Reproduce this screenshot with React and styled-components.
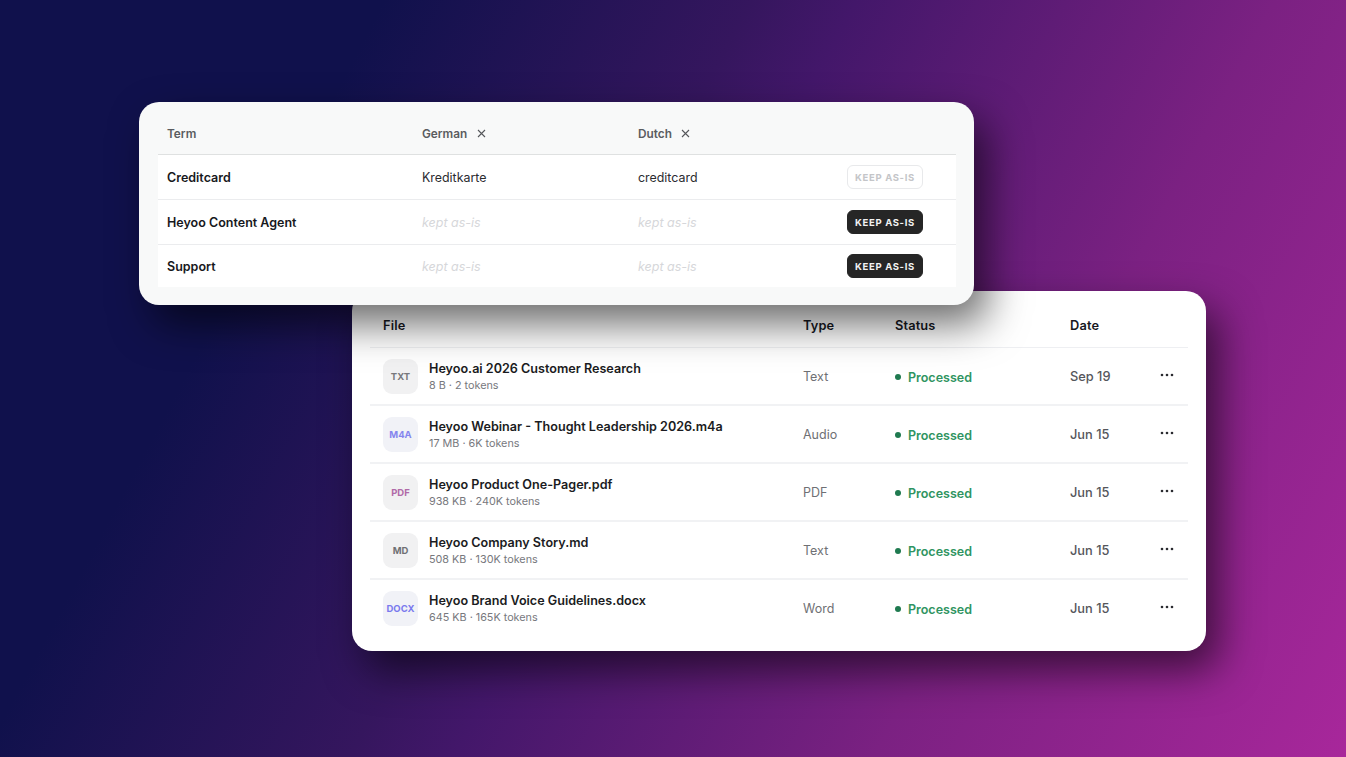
import React from "react";
import styled, { createGlobalStyle } from "styled-components";

const Global = createGlobalStyle`
  html, body { margin: 0; padding: 0; }
  body { font-family: Inter, "Liberation Sans", sans-serif; -webkit-font-smoothing: antialiased; }
`;

const Stage = styled.div`
  position: relative;
  width: 1346px;
  height: 757px;
  overflow: hidden;
  background: linear-gradient(118deg, #10114c 0%, #10114c 22%, #35165e 43%, #43176a 49%, #7b2182 73%, #a8279b 100%);
`;

const Card = styled.section`
  position: absolute;
  left: ${(p) => p.$x}px;
  top: ${(p) => p.$y}px;
  width: ${(p) => p.$w}px;
  height: ${(p) => p.$h}px;
  box-sizing: border-box;
  border-radius: 20px;
  z-index: ${(p) => p.$z};
  box-shadow: 13px 19px 40px rgba(0, 0, 0, 0.58);
`;

const TermsCard = styled(Card)`
  background: #f8f9f9;
  padding: 0 18px 18px 19px;
`;

const TermsHead = styled.div`
  display: grid;
  grid-template-columns: 255px 216px 209px 76px;
  padding: 11px 0 0 9px;
  height: 53px;
  align-items: center;
  border-bottom: 1px solid #dfe1e1;
  box-sizing: border-box;
`;

const HeadCell = styled.div`
  display: flex;
  align-items: center;
  gap: 9.5px;
  font-size: 11.8px;
  font-weight: 600;
  color: #5a5c60;
`;

const TermsBody = styled.div`
  background: #fff;
`;

const TermRow = styled.div`
  display: grid;
  grid-template-columns: 255px 216px 209px 76px;
  padding-left: 9px;
  height: ${(p) => (p.$last ? 42 : 45)}px;
  align-items: center;
  box-sizing: border-box;
  border-bottom: ${(p) => (p.$last ? "none" : "1px solid #ebecee")};
`;

const TermName = styled.div`
  font-size: 12.5px;
  font-weight: 600;
  color: #17181c;
`;

const Translation = styled.div`
  font-size: 12.4px;
  color: #2a2b2f;
`;

const Kept = styled.div`
  font-size: 12.5px;
  font-style: italic;
  color: #d6d7da;
`;

const KeepButton = styled.button`
  width: 76px;
  height: 24px;
  padding: 0;
  border-radius: 6px;
  box-sizing: border-box;
  font-family: inherit;
  font-size: 9.5px;
  font-weight: 700;
  letter-spacing: 0.65px;
  background: ${(p) => (p.$ghost ? "#fff" : "#262626")};
  color: ${(p) => (p.$ghost ? "#c4c5c8" : "#f2f2f2")};
  border: 1px solid ${(p) => (p.$ghost ? "#e8e9eb" : "#262626")};
`;

const FilesCard = styled(Card)`
  background: #fff;
  padding: 0 18px;
`;

const FileGrid = `
  display: grid;
  grid-template-columns: 420px 92px 175px 90px 20px;
  padding-left: 13px;
  align-items: center;
  box-sizing: border-box;
`;

const FilesHead = styled.div`
  ${FileGrid}
  height: 57px;
  padding-top: 12px;
  border-bottom: 1px solid #eeeff2;
  font-size: 12.8px;
  font-weight: 600;
  letter-spacing: 0.15px;
  color: #17181f;
`;

const FileRow = styled.div`
  ${FileGrid}
  height: 58px;
  border-bottom: 2px solid ${(p) => (p.$last ? "transparent" : "#f1f2f4")};
`;

const FileCell = styled.div`
  display: flex;
  align-items: center;
  gap: 11px;
`;

const FileBadge = styled.div`
  width: 35px;
  height: 35px;
  border-radius: 9px;
  display: flex;
  align-items: center;
  justify-content: center;
  font-size: 9.5px;
  font-weight: 700;
  background: ${(p) => p.$bg};
  color: ${(p) => p.$fg};
`;

const FileText = styled.div`
  display: flex;
  flex-direction: column;
  gap: 2px;
  padding-top: 2px;
`;

const FileTitle = styled.div`
  font-size: 12.6px;
  font-weight: 600;
  line-height: 16px;
  color: #1b1c22;
`;

const FileMeta = styled.div`
  font-size: 10.8px;
  line-height: 14px;
  color: #77787d;
`;

const TypeCell = styled.div`
  font-size: 12.5px;
  color: #6f7074;
`;

const Status = styled.div`
  display: flex;
  align-items: center;
  gap: 7px;
  padding-top: 2px;
  font-size: 12.5px;
  font-weight: 600;
  color: #2f9461;
`;

const Dot = styled.span`
  width: 6px;
  height: 6px;
  border-radius: 50%;
  background: #1f7a50;
`;

const DateCell = styled.div`
  font-size: 12.8px;
  font-weight: 500;
  color: #55565b;
`;

const MoreIcon = styled.svg`
  display: block;
  margin-bottom: 2px;
`;

const Close = () => (
  <svg width="9" height="9" viewBox="0 0 9 9" fill="none" stroke="#55575b" strokeWidth="1.1">
    <path d="M1 1l7 7M8 1L1 8" />
  </svg>
);

const More = () => (
  <MoreIcon width="14" height="4" viewBox="0 0 14 4" fill="#2a2b30">
    <circle cx="2" cy="2" r="1.3" />
    <circle cx="7" cy="2" r="1.3" />
    <circle cx="12" cy="2" r="1.3" />
  </MoreIcon>
);

const terms = [
  { name: "Creditcard", de: "Kreditkarte", nl: "creditcard", ghost: true },
  { name: "Heyoo Content Agent" },
  { name: "Support", last: true },
];

const files = [
  { tag: "TXT", bg: "#f1f1f2", fg: "#77787c", title: "Heyoo.ai 2026 Customer Research", meta: "8 B · 2 tokens", type: "Text", date: "Sep 19" },
  { tag: "M4A", bg: "#f1f2f7", fg: "#8585ee", title: "Heyoo Webinar - Thought Leadership 2026.m4a", meta: "17 MB · 6K tokens", type: "Audio", date: "Jun 15" },
  { tag: "PDF", bg: "#f1f1f2", fg: "#b06aa8", title: "Heyoo Product One-Pager.pdf", meta: "938 KB · 240K tokens", type: "PDF", date: "Jun 15" },
  { tag: "MD", bg: "#f1f1f2", fg: "#6f7074", title: "Heyoo Company Story.md", meta: "508 KB · 130K tokens", type: "Text", date: "Jun 15" },
  { tag: "DOCX", bg: "#f1f2f7", fg: "#7a7aee", title: "Heyoo Brand Voice Guidelines.docx", meta: "645 KB · 165K tokens", type: "Word", date: "Jun 15", last: true },
];

export default function App() {
  return (
    <Stage>
      <Global />
      <TermsCard $x={139} $y={102} $w={835} $h={203} $z={2}>
        <TermsHead>
          <HeadCell>Term</HeadCell>
          <HeadCell>German <Close /></HeadCell>
          <HeadCell>Dutch <Close /></HeadCell>
          <HeadCell />
        </TermsHead>
        <TermsBody>
          {terms.map((t) => (
            <TermRow key={t.name} $last={t.last}>
              <TermName>{t.name}</TermName>
              {t.de ? <Translation>{t.de}</Translation> : <Kept>kept as-is</Kept>}
              {t.nl ? <Translation>{t.nl}</Translation> : <Kept>kept as-is</Kept>}
              <KeepButton $ghost={t.ghost}>KEEP AS-IS</KeepButton>
            </TermRow>
          ))}
        </TermsBody>
      </TermsCard>
      <FilesCard $x={352} $y={291} $w={854} $h={360} $z={1}>
        <FilesHead>
          <div>File</div>
          <div>Type</div>
          <div>Status</div>
          <div>Date</div>
          <div />
        </FilesHead>
        {files.map((f) => (
          <FileRow key={f.title} $last={f.last}>
            <FileCell>
              <FileBadge $bg={f.bg} $fg={f.fg}>{f.tag}</FileBadge>
              <FileText>
                <FileTitle>{f.title}</FileTitle>
                <FileMeta>{f.meta}</FileMeta>
              </FileText>
            </FileCell>
            <TypeCell>{f.type}</TypeCell>
            <Status><Dot />Processed</Status>
            <DateCell>{f.date}</DateCell>
            <More />
          </FileRow>
        ))}
      </FilesCard>
    </Stage>
  );
}
